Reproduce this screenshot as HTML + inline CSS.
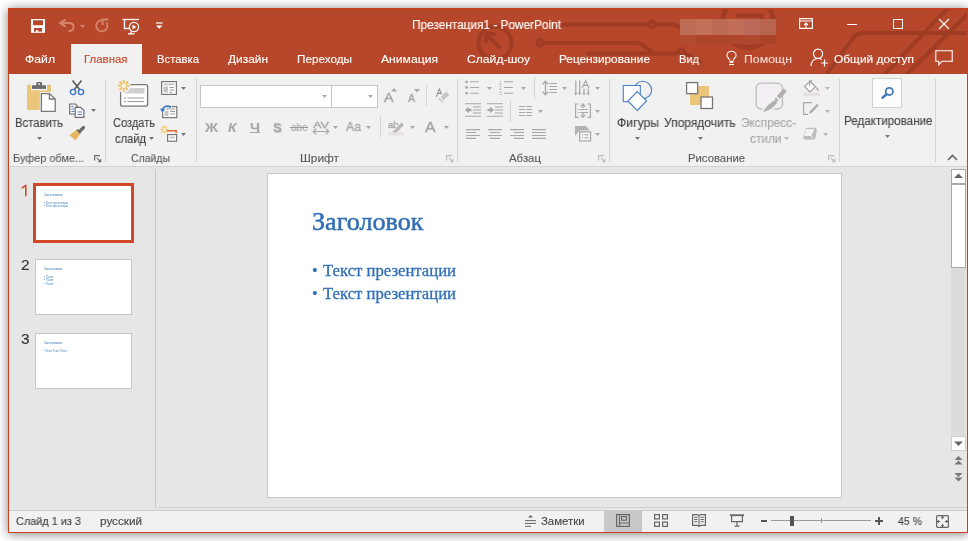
<!DOCTYPE html>
<html><head><meta charset="utf-8">
<style>
*{margin:0;padding:0;box-sizing:border-box}
html,body{width:968px;height:541px;overflow:hidden;background:#fff;font-family:"Liberation Sans",sans-serif}
.a{position:absolute;white-space:nowrap}
div.a{will-change:transform}
svg.a{overflow:visible}
</style></head><body>
<div class="a" style="left:8px;top:8px;width:960px;height:525px;background:#b7472a;box-shadow:0 1px 10px rgba(0,0,0,.5)"></div>
<svg class="a" style="left:9px;top:9px;overflow:hidden" width="958" height="65" viewBox="0 0 958 65"><g transform="translate(-9,-9)" stroke="#a03c23" stroke-width="4" fill="none" stroke-linejoin="round">
<path d="M561 24.4 H672 Q677 24.4 681 29"/><circle cx="652.2" cy="24.4" r="2.9" fill="#b7472a" stroke-width="3.6"/>
<path d="M544 43 H639.5 L654 53.4 H677"/><circle cx="540.3" cy="43" r="3" fill="#b7472a" stroke-width="3.4"/>
<path d="M586 53.4 H654"/>
<path d="M685 53 L702 63"/><circle cx="681.3" cy="52" r="3" fill="#b7472a" stroke-width="3.4"/>
<circle cx="495" cy="43" r="16.5" stroke-width="4"/><path d="M486 34 L500 48 M486 34 V43 M486 34 H495"/>
<circle cx="748" cy="22" r="25.5" stroke-width="5"/><path d="M736 15.5 H762 V40"/>
<path d="M970 33 H862 Q857 33 854 37 L826 75"/>
<path d="M950 6 L884 75 M972 10 L906 75"/>
</g></svg>
<svg class="a" style="left:31px;top:19px;" width="14" height="14" viewBox="0 0 14 14"><rect x="0" y="0" width="14" height="13.8" fill="#fff"/><path d="M2 1.2 H12 V5.2 L11.2 6.2 H2.8 L2 5.2 Z" fill="#b7472a"/><rect x="3" y="9" width="8" height="3.6" fill="#b7472a"/><rect x="5" y="11" width="2.2" height="1.8" fill="#fff"/></svg>
<svg class="a" style="left:58px;top:18px;" width="17" height="15" viewBox="0 0 17 15"><path d="M7.5 1.5 L2.2 5 L7.5 8.5" fill="none" stroke="#d6836b" stroke-width="2.2" stroke-linejoin="miter"/><path d="M2.5 5 H10.5 C13.8 5 15.6 6.8 15.6 9 C15.6 11.2 13.8 13 10.5 13" fill="none" stroke="#d6836b" stroke-width="2"/></svg>
<svg class="a" style="left:80px;top:25px;" width="5" height="3" viewBox="0 0 5 3"><path d="M0 0 H5 L2.5 3 Z" fill="#d9886f"/></svg>
<svg class="a" style="left:94px;top:18px;" width="16" height="16" viewBox="0 0 16 16"><path d="M8.2 2.2 A5.6 5.6 0 1 0 12.3 4.4" fill="none" stroke="#d6836b" stroke-width="1.9"/><path d="M14.2 1.6 H8.6 V7" fill="none" stroke="#d6836b" stroke-width="2"/></svg>
<svg class="a" style="left:122px;top:18px;" width="18" height="17" viewBox="0 0 18 17"><path d="M0.5 1.5 H17" stroke="#fff" stroke-width="1.3"/><path d="M2.5 2 V10.5 H8" fill="none" stroke="#fff" stroke-width="1.3"/><path d="M9 13.5 V15.5 M6 15.8 H12.5" fill="none" stroke="#fff" stroke-width="1.3"/><circle cx="12" cy="9" r="4.6" fill="none" stroke="#fff" stroke-width="1.3"/><path d="M10.5 6.6 L14.3 9 L10.5 11.4 Z" fill="#fff"/></svg>
<svg class="a" style="left:156px;top:22px;" width="7" height="8" viewBox="0 0 7 8"><path d="M0 1 H6.5" stroke="#fff" stroke-width="1.2"/><path d="M0 3.5 H6.5 L3.25 6.8 Z" fill="#fff"/></svg>
<div class="a" style="left:412px;top:19.32px;font:400 12.5px/12.5px &quot;Liberation Sans&quot;;color:#fff;transform:scaleX(0.9461);transform-origin:0 0;-webkit-text-stroke:0.12px #fff;">Презентация1 - PowerPoint</div>
<svg class="a" style="left:680px;top:19px;" width="96" height="25" viewBox="0 0 96 25"><rect x="0" y="0" width="16" height="16" fill="#bf6c56"/><rect x="0" y="16" width="16" height="9" fill="#b14a2f"/><rect x="16" y="0" width="16" height="16" fill="#c3705a"/><rect x="16" y="16" width="16" height="9" fill="#ad4429"/><rect x="32" y="0" width="16" height="16" fill="#bd6a55"/><rect x="32" y="16" width="16" height="9" fill="#ad4429"/><rect x="48" y="0" width="16" height="16" fill="#c16d57"/><rect x="48" y="16" width="16" height="9" fill="#b0472c"/><rect x="64" y="0" width="16" height="16" fill="#bb6a5a"/><rect x="64" y="16" width="16" height="9" fill="#b0482d"/><rect x="80" y="0" width="16" height="16" fill="#b8654f"/><rect x="80" y="16" width="16" height="9" fill="#ab4328"/></svg>
<svg class="a" style="left:799px;top:18px;" width="14" height="11" viewBox="0 0 14 11"><path d="M0.6 0.6 H13.4 V10.4 H0.6 Z M0.6 3 H13.4" fill="none" stroke="#fff" stroke-width="1.1"/><path d="M7 9.8 V5.2 M5 7 L7 5 L9 7" fill="none" stroke="#fff" stroke-width="1.1"/></svg>
<div class="a" style="left:847px;top:24px;width:10px;height:1px;background:#fff"></div>
<div class="a" style="left:893px;top:19px;width:10px;height:10px;border:1px solid #fff"></div>
<svg class="a" style="left:938px;top:18px;" width="12" height="12" viewBox="0 0 12 12"><path d="M1 1 L11 11 M11 1 L1 11" stroke="#fff" stroke-width="1.1"/></svg>
<div class="a" style="left:71px;top:44px;width:71px;height:30px;background:#f1f1f1"></div>
<div class="a" style="left:25px;top:54.33px;font:400 11.3px/11.3px &quot;Liberation Sans&quot;;color:#fff;transform:scaleX(1.0802);transform-origin:0 0;-webkit-text-stroke:0.12px #fff;">Файл</div>
<div class="a" style="left:84px;top:54.33px;font:400 11.3px/11.3px &quot;Liberation Sans&quot;;color:#c5472a;transform:scaleX(1.0117);transform-origin:0 0;-webkit-text-stroke:0.12px #c5472a;">Главная</div>
<div class="a" style="left:157px;top:54.33px;font:400 11.3px/11.3px &quot;Liberation Sans&quot;;color:#fff;transform:scaleX(1.0003);transform-origin:0 0;-webkit-text-stroke:0.12px #fff;">Вставка</div>
<div class="a" style="left:228px;top:54.33px;font:400 11.3px/11.3px &quot;Liberation Sans&quot;;color:#fff;transform:scaleX(1.0534);transform-origin:0 0;-webkit-text-stroke:0.12px #fff;">Дизайн</div>
<div class="a" style="left:297px;top:54.33px;font:400 11.3px/11.3px &quot;Liberation Sans&quot;;color:#fff;transform:scaleX(1.0380);transform-origin:0 0;-webkit-text-stroke:0.12px #fff;">Переходы</div>
<div class="a" style="left:381px;top:54.33px;font:400 11.3px/11.3px &quot;Liberation Sans&quot;;color:#fff;transform:scaleX(1.0748);transform-origin:0 0;-webkit-text-stroke:0.12px #fff;">Анимация</div>
<div class="a" style="left:467px;top:54.33px;font:400 11.3px/11.3px &quot;Liberation Sans&quot;;color:#fff;transform:scaleX(1.0757);transform-origin:0 0;-webkit-text-stroke:0.12px #fff;">Слайд-шоу</div>
<div class="a" style="left:559px;top:54.33px;font:400 11.3px/11.3px &quot;Liberation Sans&quot;;color:#fff;transform:scaleX(1.0432);transform-origin:0 0;-webkit-text-stroke:0.12px #fff;">Рецензирование</div>
<div class="a" style="left:679px;top:54.33px;font:400 11.3px/11.3px &quot;Liberation Sans&quot;;color:#fff;transform:scaleX(0.9786);transform-origin:0 0;-webkit-text-stroke:0.12px #fff;">Вид</div>
<svg class="a" style="left:726px;top:51px;" width="11" height="15" viewBox="0 0 11 15"><path d="M3.6 9.4 C3.6 7.4 0.9 6.4 0.9 4.4 A4.6 4.1 0 0 1 10.1 4.4 C10.1 6.4 7.4 7.4 7.4 9.4" fill="none" stroke="#fff" stroke-width="1.1"/><rect x="3.5" y="9.8" width="4" height="2" fill="#fff"/><path d="M3 13.5 H8" stroke="#fff" stroke-width="1.1"/></svg>
<div class="a" style="left:744px;top:54.33px;font:400 11.3px/11.3px &quot;Liberation Sans&quot;;color:#f3d9d1;transform:scaleX(1.0913);transform-origin:0 0;-webkit-text-stroke:0.12px #f3d9d1;">Помощн</div>
<svg class="a" style="left:810px;top:48px;" width="19" height="19" viewBox="0 0 19 19"><circle cx="8" cy="5.8" r="4.6" fill="none" stroke="#fff" stroke-width="1.2"/><path d="M1 18 C1.5 12.5 4 10.5 8 10.5 C9.6 10.5 10.8 10.8 11.8 11.4" fill="none" stroke="#fff" stroke-width="1.2"/><path d="M14.5 11.5 V18.5 M11 15 H18" stroke="#fff" stroke-width="1.2"/></svg>
<div class="a" style="left:834px;top:54.33px;font:400 11.3px/11.3px &quot;Liberation Sans&quot;;color:#fff;transform:scaleX(1.0540);transform-origin:0 0;-webkit-text-stroke:0.12px #fff;">Общий доступ</div>
<svg class="a" style="left:935px;top:50px;" width="18" height="16" viewBox="0 0 18 16"><path d="M0.8 0.8 H17.2 V11.2 H7 L3.8 14.8 V11.2 H0.8 Z" fill="none" stroke="#fff" stroke-width="1.1"/></svg>
<div class="a" style="left:9px;top:74px;width:958px;height:93px;background:#f1f1f1;border-bottom:1px solid #d4d4d4"></div>
<svg class="a" style="left:26px;top:81px;" width="31" height="32" viewBox="0 0 31 32"><rect x="1" y="3.7" width="24" height="25.3" rx="1.2" fill="#eac57a"/>
<rect x="5" y="2.8" width="16" height="6.6" fill="#f1f1f1"/>
<rect x="6" y="4.3" width="14" height="3.6" fill="#6b6b6b"/>
<rect x="10.3" y="1" width="5.7" height="4" rx="1" fill="#6b6b6b"/><circle cx="13.1" cy="3" r="0.9" fill="#f1f1f1"/>
<rect x="13.8" y="11" width="17" height="21" fill="#f1f1f1"/>
<path d="M15.4 12.6 H23.4 L29.2 18 V30.4 H15.4 Z" fill="#fff" stroke="#777" stroke-width="1.3"/>
<path d="M23.4 12.6 V18 H29.2" fill="none" stroke="#777" stroke-width="1.3"/></svg>
<div class="a" style="left:15px;top:117.49px;font:400 12.3px/12.3px &quot;Liberation Sans&quot;;color:#444;transform:scaleX(0.9209);transform-origin:0 0;-webkit-text-stroke:0.12px #444;">Вставить</div>
<svg class="a" style="left:37px;top:137px;" width="5" height="3" viewBox="0 0 5 3"><path d="M0 0 H5 L2.5 3 Z" fill="#777"/></svg>
<svg class="a" style="left:69px;top:80px;" width="16" height="16" viewBox="0 0 16 16"><path d="M3.5 0.5 L11 10 M12.5 0.5 L5 10" stroke="#555" stroke-width="1.5"/>
<circle cx="4" cy="12" r="2.6" fill="none" stroke="#3a78c3" stroke-width="1.4"/><circle cx="12" cy="12" r="2.6" fill="none" stroke="#3a78c3" stroke-width="1.4"/></svg>
<svg class="a" style="left:69px;top:103px;" width="16" height="15" viewBox="0 0 16 15"><path d="M0.7 1 H6.2 L8.5 3.3 V11 H0.7 Z" fill="#fff" stroke="#6b6b6b" stroke-width="1.2"/>
<path d="M2.2 3.5 H4.5 M2.2 6 H5.5 M2.2 8.5 H5.5" stroke="#4a80c8" stroke-width="1.1"/>
<path d="M6.2 4.3 H11.7 L14.9 7.5 V14.4 H6.2 Z" fill="#fff" stroke="#6b6b6b" stroke-width="1.2"/>
<path d="M8.5 9 H13 M8.5 11.5 H13" stroke="#4a80c8" stroke-width="1.1"/></svg>
<svg class="a" style="left:91px;top:109px;" width="5" height="3" viewBox="0 0 5 3"><path d="M0 0 H5 L2.5 3 Z" fill="#777"/></svg>
<svg class="a" style="left:69px;top:126px;" width="17" height="15" viewBox="0 0 17 15"><path d="M9.5 6.5 L14.5 1.5" stroke="#6b6b6b" stroke-width="3.2" stroke-linecap="round"/>
<path d="M0.5 9 L8 3.5 L11.5 7.5 L6.5 14.5 Z" fill="#e8b65e"/>
<path d="M8 3.5 L11.5 7.5" stroke="#6b6b6b" stroke-width="1.6"/></svg>
<div class="a" style="left:13px;top:153.33px;font:400 11.3px/11.3px &quot;Liberation Sans&quot;;color:#5a5a5a;transform:scaleX(0.9639);transform-origin:0 0;-webkit-text-stroke:0.12px #5a5a5a;">Буфер обме...</div>
<svg class="a" style="left:94px;top:155px;" width="8" height="8" viewBox="0 0 8 8"><path d="M0.6 5.6 V0.6 H6" fill="none" stroke="#6e6e6e" stroke-width="1.2"/><path d="M2.8 2.8 L6 6" stroke="#6e6e6e" stroke-width="1.1"/><path d="M7.3 3.6 V7.3 H3.6 Z" fill="#6e6e6e"/></svg>
<div class="a" style="left:105px;top:79px;width:1px;height:83px;background:#d5d5d5"></div>
<svg class="a" style="left:117px;top:79px;" width="32" height="29" viewBox="0 0 32 29"><rect x="3.6" y="5.6" width="27" height="21.6" rx="2" fill="#fff" stroke="#777" stroke-width="1.3"/>
<rect x="7" y="9" width="20.5" height="5.5" fill="#d0d0d0"/>
<path d="M7 19 H9 M10.5 19 H27 M7 22.5 H9 M10.5 22.5 H27" stroke="#9a9a9a" stroke-width="1"/>
<circle cx="6.7" cy="6.7" r="7" fill="#f1f1f1"/>
<g stroke="#efbe5a" stroke-width="1.8"><path d="M6.7 0.8 V12.6 M0.8 6.7 H12.6 M2.5 2.5 L10.9 10.9 M10.9 2.5 L2.5 10.9"/></g>
<circle cx="6.7" cy="6.7" r="2.4" fill="#fbf3e0"/></svg>
<div class="a" style="left:112.5px;top:117.49px;font:400 12.3px/12.3px &quot;Liberation Sans&quot;;color:#444;transform:scaleX(0.8987);transform-origin:0 0;-webkit-text-stroke:0.12px #444;">Создать</div>
<div class="a" style="left:114.5px;top:133.49px;font:400 12.3px/12.3px &quot;Liberation Sans&quot;;color:#444;transform:scaleX(0.9063);transform-origin:0 0;-webkit-text-stroke:0.12px #444;">слайд</div>
<svg class="a" style="left:149px;top:137px;" width="5" height="3" viewBox="0 0 5 3"><path d="M0 0 H5 L2.5 3 Z" fill="#777"/></svg>
<svg class="a" style="left:161px;top:81px;" width="16" height="14" viewBox="0 0 16 14"><rect x="0.6" y="0.6" width="14.8" height="12.8" fill="#fff" stroke="#777" stroke-width="1.2"/>
<rect x="2.5" y="2.5" width="11" height="1.8" fill="#c4c4c4"/><rect x="2.5" y="5.5" width="4.5" height="6" fill="#c4c4c4"/>
<path d="M8.5 6.5 H13 M8.5 9 H13 M8.5 11.3 H11" stroke="#999" stroke-width="1"/></svg>
<svg class="a" style="left:181px;top:87px;" width="5" height="3" viewBox="0 0 5 3"><path d="M0 0 H5 L2.5 3 Z" fill="#777"/></svg>
<svg class="a" style="left:160px;top:103px;" width="18" height="16" viewBox="0 0 18 16"><rect x="2.6" y="3.6" width="14.2" height="11" fill="#fff" stroke="#777" stroke-width="1.2"/>
<rect x="4.5" y="8" width="4" height="5" fill="#c4c4c4"/><path d="M10 8.5 H15 M10 11 H15 M6 6 H15" stroke="#999" stroke-width="1"/>
<path d="M1.5 8 C2 3 7 1 11.5 4" fill="none" stroke="#f1f1f1" stroke-width="4"/>
<path d="M2.2 7.5 C3 3.5 7 1.8 11 4.2" fill="none" stroke="#3a78c3" stroke-width="1.7"/><path d="M0 5.5 L2.2 9.5 L5.2 6.5 Z" fill="#3a78c3"/></svg>
<svg class="a" style="left:160px;top:125px;" width="18" height="17" viewBox="0 0 18 17"><g stroke="#efbe5a" stroke-width="1.1"><path d="M4.3 0.5 V8.5 M0.3 4.5 H8.3 M1.5 1.7 L7.1 7.3 M7.1 1.7 L1.5 7.3"/></g><circle cx="4.3" cy="4.5" r="1.5" fill="#fbf3e0"/>
<path d="M7 5.7 H16.2 V8.2" fill="none" stroke="#e3692a" stroke-width="1.4"/>
<rect x="7.6" y="9.6" width="9" height="6.6" fill="#fff" stroke="#777" stroke-width="1.2"/><rect x="9.5" y="11.5" width="5.5" height="2" fill="#c8c8c8"/></svg>
<svg class="a" style="left:181px;top:133px;" width="5" height="3" viewBox="0 0 5 3"><path d="M0 0 H5 L2.5 3 Z" fill="#777"/></svg>
<div class="a" style="left:130.5px;top:153.33px;font:400 11.3px/11.3px &quot;Liberation Sans&quot;;color:#5a5a5a;transform:scaleX(0.9274);transform-origin:0 0;-webkit-text-stroke:0.12px #5a5a5a;">Слайды</div>
<div class="a" style="left:196px;top:79px;width:1px;height:83px;background:#d5d5d5"></div>
<div class="a" style="left:200px;top:85px;width:132px;height:23px;background:#fff;border:1px solid #c6c6c6"></div>
<div class="a" style="left:331px;top:85px;width:47px;height:23px;background:#fff;border:1px solid #c6c6c6"></div>
<svg class="a" style="left:322px;top:95px;" width="5" height="3" viewBox="0 0 5 3"><path d="M0 0 H5 L2.5 3 Z" fill="#a8a8a8"/></svg>
<svg class="a" style="left:368px;top:95px;" width="5" height="3" viewBox="0 0 5 3"><path d="M0 0 H5 L2.5 3 Z" fill="#a8a8a8"/></svg>
<div class="a" style="left:384.3px;top:90.97px;font:400 13.5px/13.5px &quot;Liberation Sans&quot;;color:#a8a8a8;transform:scaleX(1.0550);transform-origin:0 0;-webkit-text-stroke:0.12px #a8a8a8;-webkit-text-stroke:0.5px #a8a8a8;">A</div>
<svg class="a" style="left:391px;top:88px;" width="6" height="4" viewBox="0 0 6 4"><path d="M0 3.5 H6 L3 0 Z" fill="#a8a8a8"/></svg>
<div class="a" style="left:407.5px;top:92.79px;font:400 11px/11px &quot;Liberation Sans&quot;;color:#a8a8a8;transform:scaleX(0.9541);transform-origin:0 0;-webkit-text-stroke:0.12px #a8a8a8;-webkit-text-stroke:0.45px #a8a8a8;">A</div>
<svg class="a" style="left:413.5px;top:89px;" width="6" height="4" viewBox="0 0 6 4"><path d="M0 0 H6 L3 3.5 Z" fill="#a8a8a8"/></svg>
<div class="a" style="left:426px;top:85px;width:1px;height:21px;background:#d5d5d5"></div>
<svg class="a" style="left:435px;top:88px;" width="17" height="17" viewBox="0 0 17 17"><path d="M1.2 8.8 L4.3 1 L6.6 6.2 M2.6 5.4 H5.9" fill="none" stroke="#999" stroke-width="1.2"/>
<path d="M11 3.1 L14.9 6.6 L8.8 12.6 L5.3 9.2 Z" fill="#c6c6c6" stroke="#f1f1f1" stroke-width="0.8"/>
<path d="M3 10.8 L4.2 9.7 L8.6 13.6 L7.3 14.9 Z" fill="#cfcfcf"/></svg>
<div class="a" style="left:204.5px;top:120.90px;font:700 13px/13px &quot;Liberation Sans&quot;;color:#a8a8a8;transform:scaleX(1.1064);transform-origin:0 0;-webkit-text-stroke:0.12px #a8a8a8;">Ж</div>
<div class="a" style="left:228px;top:120.90px;font:700 13px/13px &quot;Liberation Sans&quot;;color:#a8a8a8;transform:scaleX(1.0636);transform-origin:0 0;-webkit-text-stroke:0.12px #a8a8a8;font-style:italic;">К</div>
<div class="a" style="left:250px;top:120.90px;font:700 13px/13px &quot;Liberation Sans&quot;;color:#a8a8a8;transform:scaleX(1.0948);transform-origin:0 0;-webkit-text-stroke:0.12px #a8a8a8;">Ч</div>
<div class="a" style="left:250px;top:132px;width:10px;height:1px;background:#a8a8a8"></div>
<div class="a" style="left:274px;top:121.90px;font:700 13px/13px &quot;Liberation Sans&quot;;color:#c8c8c8;transform:scaleX(0.9803);transform-origin:0 0;-webkit-text-stroke:0.12px #c8c8c8;">S</div>
<div class="a" style="left:273px;top:120.90px;font:700 13px/13px &quot;Liberation Sans&quot;;color:#a8a8a8;transform:scaleX(0.9803);transform-origin:0 0;-webkit-text-stroke:0.12px #a8a8a8;">S</div>
<div class="a" style="left:290.8px;top:121.79px;font:400 11px/11px &quot;Liberation Sans&quot;;color:#a8a8a8;transform:scaleX(0.9191);transform-origin:0 0;-webkit-text-stroke:0.12px #a8a8a8;">abc</div>
<div class="a" style="left:290px;top:127px;width:18px;height:1px;background:#999"></div>
<div class="a" style="left:313px;top:119.77px;font:400 9.6px/9.6px &quot;Liberation Sans&quot;;color:#a8a8a8;transform:scaleX(1.3239);transform-origin:0 0;-webkit-text-stroke:0.12px #a8a8a8;-webkit-text-stroke:0.35px #a8a8a8;">AV</div>
<svg class="a" style="left:312px;top:128px;" width="18" height="7" viewBox="0 0 18 7"><path d="M1.2 3.5 H16.8 M4.2 0.8 L1.2 3.5 L4.2 6.2 M13.8 0.8 L16.8 3.5 L13.8 6.2" fill="none" stroke="#a8a8a8" stroke-width="1.2"/></svg>
<svg class="a" style="left:333px;top:126px;" width="5" height="3" viewBox="0 0 5 3"><path d="M0 0 H5 L2.5 3 Z" fill="#a8a8a8"/></svg>
<div class="a" style="left:346px;top:120.47px;font:400 13.5px/13.5px &quot;Liberation Sans&quot;;color:#a8a8a8;transform:scaleX(0.9084);transform-origin:0 0;-webkit-text-stroke:0.12px #a8a8a8;-webkit-text-stroke:0.35px #a8a8a8;">Aa</div>
<svg class="a" style="left:366px;top:126px;" width="5" height="3" viewBox="0 0 5 3"><path d="M0 0 H5 L2.5 3 Z" fill="#a8a8a8"/></svg>
<div class="a" style="left:380px;top:116px;width:1px;height:21px;background:#d5d5d5"></div>
<svg class="a" style="left:388px;top:120px;" width="17" height="15" viewBox="0 0 17 15"><text x="0" y="8.3" font-family="Liberation Sans" font-size="9.5" fill="#a8a8a8" stroke="#a8a8a8" stroke-width="0.35">ab</text>
<path d="M3 12.5 L13.5 1.5 L17 5 L6.5 15 Z" fill="#f1f1f1"/><path d="M4.5 12 L13.5 2.5 L16 5 L7 14 Z" fill="#b8b8b8"/><rect x="0" y="12.3" width="16" height="3.2" fill="#e7e0e7"/></svg>
<svg class="a" style="left:410px;top:126px;" width="5" height="3" viewBox="0 0 5 3"><path d="M0 0 H5 L2.5 3 Z" fill="#a8a8a8"/></svg>
<div class="a" style="left:425px;top:119.63px;font:400 14.5px/14.5px &quot;Liberation Sans&quot;;color:#a8a8a8;transform:scaleX(1.0857);transform-origin:0 0;-webkit-text-stroke:0.12px #a8a8a8;-webkit-text-stroke:0.5px #a8a8a8;">A</div>
<svg class="a" style="left:444px;top:126px;" width="5" height="3" viewBox="0 0 5 3"><path d="M0 0 H5 L2.5 3 Z" fill="#a8a8a8"/></svg>
<div class="a" style="left:299.5px;top:153.33px;font:400 11.3px/11.3px &quot;Liberation Sans&quot;;color:#5a5a5a;transform:scaleX(1.0493);transform-origin:0 0;-webkit-text-stroke:0.12px #5a5a5a;">Шрифт</div>
<svg class="a" style="left:446px;top:155px;" width="8" height="8" viewBox="0 0 8 8"><path d="M0.6 5.6 V0.6 H6" fill="none" stroke="#bdbdbd" stroke-width="1.2"/><path d="M2.8 2.8 L6 6" stroke="#bdbdbd" stroke-width="1.1"/><path d="M7.3 3.6 V7.3 H3.6 Z" fill="#bdbdbd"/></svg>
<div class="a" style="left:457px;top:79px;width:1px;height:83px;background:#d5d5d5"></div>
<svg class="a" style="left:465px;top:80px;" width="15" height="15" viewBox="0 0 15 15"><g fill="#a8a8a8"><circle cx="1.6" cy="1.8" r="1.4"/><circle cx="1.6" cy="7.5" r="1.4"/><circle cx="1.6" cy="13.2" r="1.4"/></g><path d="M5 1.8 H14 M5 7.5 H14 M5 13.2 H14" stroke="#a8a8a8" stroke-width="1.1"/></svg>
<svg class="a" style="left:487px;top:87px;" width="5" height="3" viewBox="0 0 5 3"><path d="M0 0 H5 L2.5 3 Z" fill="#a8a8a8"/></svg>
<svg class="a" style="left:499px;top:80px;" width="15" height="15" viewBox="0 0 15 15"><text x="0" y="5" font-family="Liberation Sans" font-size="5" fill="#a8a8a8">1</text><text x="0" y="10" font-family="Liberation Sans" font-size="5" fill="#a8a8a8">2</text><text x="0" y="15" font-family="Liberation Sans" font-size="5" fill="#a8a8a8">3</text><path d="M5 1.8 H14 M5 7.5 H14 M5 13.2 H14" stroke="#a8a8a8" stroke-width="1.1"/></svg>
<svg class="a" style="left:521px;top:87px;" width="5" height="3" viewBox="0 0 5 3"><path d="M0 0 H5 L2.5 3 Z" fill="#a8a8a8"/></svg>
<div class="a" style="left:534px;top:77px;width:1px;height:22px;background:#d5d5d5"></div>
<svg class="a" style="left:542px;top:80px;" width="16" height="16" viewBox="0 0 16 16"><path d="M3.5 1.5 V14.5" stroke="#a8a8a8" stroke-width="1.2"/><path d="M0.8 4.2 L3.5 1.2 L6.2 4.2 M0.8 11.8 L3.5 14.8 L6.2 11.8" fill="none" stroke="#a8a8a8" stroke-width="1.3"/><path d="M7.5 3.5 H15 M7.5 6.5 H15 M7.5 9.5 H15 M7.5 12.5 H15" stroke="#a8a8a8" stroke-width="1.1"/></svg>
<svg class="a" style="left:562px;top:87px;" width="5" height="3" viewBox="0 0 5 3"><path d="M0 0 H5 L2.5 3 Z" fill="#a8a8a8"/></svg>
<svg class="a" style="left:575px;top:80px;" width="16" height="16" viewBox="0 0 16 16"><path d="M0.8 0.5 V14 M4.7 0.5 V14 M9 8.8 V14 M13.2 8.8 V14" stroke="#a8a8a8" stroke-width="1.2"/><path d="M-1 12.8 L0.8 15.6 L2.6 12.8 Z M2.9 12.8 L4.7 15.6 L6.5 12.8 Z M7.2 12.8 L9 15.6 L10.8 12.8 Z M11.4 12.8 L13.2 15.6 L15 12.8 Z" fill="#a8a8a8"/><path d="M7.2 8 L10.6 0.6 L14 8 M8.3 5.3 H12.9" fill="none" stroke="#a8a8a8" stroke-width="1.2"/></svg>
<svg class="a" style="left:595px;top:87px;" width="5" height="3" viewBox="0 0 5 3"><path d="M0 0 H5 L2.5 3 Z" fill="#a8a8a8"/></svg>
<svg class="a" style="left:465px;top:103px;" width="16" height="14" viewBox="0 0 16 14"><path d="M0 0.8 H16 M8 4 H16 M8 7 H16 M8 10 H16 M0 13.2 H16" stroke="#a8a8a8" stroke-width="1.1"/><path d="M0 7 L3.8 3.8 V5.8 H6.5 V8.2 H3.8 V10.2 Z" fill="#a8a8a8"/></svg>
<svg class="a" style="left:487px;top:103px;" width="16" height="14" viewBox="0 0 16 14"><path d="M0 0.8 H16 M8 4 H16 M8 7 H16 M8 10 H16 M0 13.2 H16" stroke="#a8a8a8" stroke-width="1.1"/><path d="M7 7 L3.2 3.8 V5.8 H0.5 V8.2 H3.2 V10.2 Z" fill="#a8a8a8"/></svg>
<div class="a" style="left:510px;top:100px;width:1px;height:22px;background:#d5d5d5"></div>
<svg class="a" style="left:519px;top:105px;" width="14" height="12" viewBox="0 0 14 12"><path d="M0 1.5 H6 M0 4.5 H6 M0 7.5 H6 M0 10.5 H6 M7 1.5 H13 M7 4.5 H13 M7 7.5 H13 M7 10.5 H13" stroke="#a8a8a8" stroke-width="1.1"/></svg>
<svg class="a" style="left:538px;top:110px;" width="5" height="3" viewBox="0 0 5 3"><path d="M0 0 H5 L2.5 3 Z" fill="#a8a8a8"/></svg>
<svg class="a" style="left:575px;top:103px;" width="16" height="16" viewBox="0 0 16 16"><rect x="1" y="1" width="14" height="13.5" fill="#f4eff4"/><path d="M3.5 1 H0.6 V14.4 H3.5 M12.5 1 H15.4 V14.4 H12.5" fill="none" stroke="#a8a8a8" stroke-width="1.2"/><path d="M8 1.5 V5 M8 10 V14" stroke="#a8a8a8" stroke-width="1.2"/><path d="M5.8 3.6 L8 1 L10.2 3.6 M5.8 11.8 L8 14.4 L10.2 11.8" fill="none" stroke="#a8a8a8" stroke-width="1.2"/><path d="M3 6.5 H4 M5 6.5 H13 M3 9.5 H4 M5 9.5 H13" stroke="#a8a8a8" stroke-width="1"/></svg>
<svg class="a" style="left:595px;top:110px;" width="5" height="3" viewBox="0 0 5 3"><path d="M0 0 H5 L2.5 3 Z" fill="#a8a8a8"/></svg>
<svg class="a" style="left:466px;top:129px;" width="14" height="10" viewBox="0 0 14 10"><path d="M0 0.6 H14 M0 3.5 H10 M0 6.5 H14 M0 9.4 H10" stroke="#a8a8a8" stroke-width="1.1"/></svg>
<svg class="a" style="left:488px;top:129px;" width="14" height="10" viewBox="0 0 14 10"><path d="M0 0.6 H14 M2 3.5 H12 M0 6.5 H14 M2 9.4 H12" stroke="#a8a8a8" stroke-width="1.1"/></svg>
<svg class="a" style="left:510px;top:129px;" width="14" height="10" viewBox="0 0 14 10"><path d="M0 0.6 H14 M4 3.5 H14 M0 6.5 H14 M4 9.4 H14" stroke="#a8a8a8" stroke-width="1.1"/></svg>
<svg class="a" style="left:532px;top:129px;" width="14" height="10" viewBox="0 0 14 10"><path d="M0 0.6 H14 M0 3.5 H14 M0 6.5 H14 M0 9.4 H14" stroke="#a8a8a8" stroke-width="1.1"/></svg>
<svg class="a" style="left:575px;top:126px;" width="17" height="16" viewBox="0 0 17 16"><path d="M0 0 H11 L15 4.6 H4.5 L0 10 Z" fill="#b3b3b3"/><rect x="4.6" y="5.8" width="11" height="9.2" fill="#f4eff4" stroke="#a8a8a8" stroke-width="1.2"/><path d="M7 8.8 H8 M9.5 8.8 H13.5 M7 11.8 H8 M9.5 11.8 H13.5" stroke="#a8a8a8" stroke-width="1"/></svg>
<svg class="a" style="left:595px;top:133px;" width="5" height="3" viewBox="0 0 5 3"><path d="M0 0 H5 L2.5 3 Z" fill="#a8a8a8"/></svg>
<div class="a" style="left:509px;top:153.33px;font:400 11.3px/11.3px &quot;Liberation Sans&quot;;color:#5a5a5a;transform:scaleX(1.0098);transform-origin:0 0;-webkit-text-stroke:0.12px #5a5a5a;">Абзац</div>
<svg class="a" style="left:598px;top:155px;" width="8" height="8" viewBox="0 0 8 8"><path d="M0.6 5.6 V0.6 H6" fill="none" stroke="#bdbdbd" stroke-width="1.2"/><path d="M2.8 2.8 L6 6" stroke="#bdbdbd" stroke-width="1.1"/><path d="M7.3 3.6 V7.3 H3.6 Z" fill="#bdbdbd"/></svg>
<div class="a" style="left:609px;top:79px;width:1px;height:83px;background:#d5d5d5"></div>
<svg class="a" style="left:620px;top:80px;" width="34" height="33" viewBox="0 0 34 33"><circle cx="22.8" cy="10" r="8.8" fill="#f1f1f1" stroke="#4a80c4" stroke-width="1.1"/>
<rect x="3.3" y="5.5" width="17" height="16.2" fill="#fff" stroke="#4a80c4" stroke-width="1.1"/>
<path d="M17.3 11.6 L26.6 21 L17.3 30.4 L7.9 21 Z" fill="#fff" stroke="#4a80c4" stroke-width="1.1"/></svg>
<div class="a" style="left:616.5px;top:117.49px;font:400 12.3px/12.3px &quot;Liberation Sans&quot;;color:#444;transform:scaleX(0.9908);transform-origin:0 0;-webkit-text-stroke:0.12px #444;">Фигуры</div>
<svg class="a" style="left:635px;top:137px;" width="5" height="3" viewBox="0 0 5 3"><path d="M0 0 H5 L2.5 3 Z" fill="#777"/></svg>
<svg class="a" style="left:685px;top:81px;" width="29" height="29" viewBox="0 0 29 29"><rect x="5" y="5" width="19" height="19" fill="#eac57a"/>
<rect x="1.6" y="1.6" width="11" height="11" fill="#fff" stroke="#777" stroke-width="1.3"/>
<rect x="16" y="16" width="11.5" height="11.5" fill="#fff" stroke="#777" stroke-width="1.3"/></svg>
<div class="a" style="left:664px;top:117.49px;font:400 12.3px/12.3px &quot;Liberation Sans&quot;;color:#444;transform:scaleX(0.9771);transform-origin:0 0;-webkit-text-stroke:0.12px #444;">Упорядочить</div>
<svg class="a" style="left:698px;top:137px;" width="5" height="3" viewBox="0 0 5 3"><path d="M0 0 H5 L2.5 3 Z" fill="#777"/></svg>
<svg class="a" style="left:755px;top:82px;" width="32" height="31" viewBox="0 0 32 31"><rect x="1.2" y="1.2" width="26.3" height="25.8" rx="5" fill="#f4eff4" stroke="#bdbdbd" stroke-width="1.3"/>
<path d="M31 7 L20 19 M20 18 C17 19.5 12 23 7.5 30 C13 29 19 26 22.5 21 Z" stroke="#f1f1f1" stroke-width="3.5" fill="#f1f1f1"/>
<path d="M30.2 7.8 L23.5 15.5" stroke="#b0b0b0" stroke-width="4.2"/>
<path d="M22.3 16.8 L20.8 18.5" stroke="#b0b0b0" stroke-width="3.6"/>
<path d="M19.8 18.3 C16.5 20 12 23.5 8 29.8 C13.5 29 18.5 26 21.8 21 C22.2 20 21 18.5 19.8 18.3 Z" fill="#b0b0b0"/></svg>
<div class="a" style="left:741px;top:117.49px;font:400 12.3px/12.3px &quot;Liberation Sans&quot;;color:#a8a8a8;transform:scaleX(0.9610);transform-origin:0 0;-webkit-text-stroke:0.12px #a8a8a8;">Экспресс-</div>
<div class="a" style="left:749.5px;top:133.49px;font:400 12.3px/12.3px &quot;Liberation Sans&quot;;color:#a8a8a8;transform:scaleX(0.9635);transform-origin:0 0;-webkit-text-stroke:0.12px #a8a8a8;">стили</div>
<svg class="a" style="left:784px;top:137px;" width="5" height="3" viewBox="0 0 5 3"><path d="M0 0 H5 L2.5 3 Z" fill="#b5b5b5"/></svg>
<svg class="a" style="left:803px;top:80px;" width="17" height="17" viewBox="0 0 17 17"><path d="M1.5 6.5 L7 1.5 L12.5 6.8 L7 12 Z" fill="#fff" stroke="#a8a8a8" stroke-width="1.3"/><path d="M6.5 6 V0.8 H8.5 V4" fill="none" stroke="#a8a8a8" stroke-width="1.1"/>
<path d="M12.5 6.8 C14.5 8 16 9.5 15.5 11.5 C14.5 11 13.5 9 12.5 6.8 Z" fill="#999"/>
<rect x="0" y="12.6" width="17" height="3.6" fill="#e6dfe6"/></svg>
<svg class="a" style="left:825px;top:87px;" width="5" height="3" viewBox="0 0 5 3"><path d="M0 0 H5 L2.5 3 Z" fill="#b5b5b5"/></svg>
<svg class="a" style="left:803px;top:102px;" width="16" height="13" viewBox="0 0 16 13"><path d="M9 0.6 H0.6 V12.4 H5" fill="none" stroke="#a8a8a8" stroke-width="1.2"/>
<path d="M5.5 12 L7 9 L14 1.8 L15.8 3.6 L8.8 10.8 Z" fill="#b0b0b0"/></svg>
<svg class="a" style="left:825px;top:110px;" width="5" height="3" viewBox="0 0 5 3"><path d="M0 0 H5 L2.5 3 Z" fill="#b5b5b5"/></svg>
<svg class="a" style="left:802px;top:127px;" width="17" height="14" viewBox="0 0 17 14"><path d="M4 1.8 Q4.6 0.8 6 0.8 H12.6 Q14.6 0.8 14.8 3 L13.6 10.5 Q13 12.8 10.8 12.8 H3.6 Q1.4 12.8 1.4 10.6 L1.6 8.6 Z" fill="#bcbcbc"/>
<path d="M4.2 1.9 H12.4 L9.3 9 H2.1 Z" fill="#f5f0f5"/>
<path d="M9.3 9 L11.2 12.2" stroke="#ececec" stroke-width="0.9"/></svg>
<svg class="a" style="left:823px;top:133px;" width="5" height="3" viewBox="0 0 5 3"><path d="M0 0 H5 L2.5 3 Z" fill="#b5b5b5"/></svg>
<div class="a" style="left:688px;top:153.33px;font:400 11.3px/11.3px &quot;Liberation Sans&quot;;color:#5a5a5a;transform:scaleX(1.0019);transform-origin:0 0;-webkit-text-stroke:0.12px #5a5a5a;">Рисование</div>
<svg class="a" style="left:828px;top:155px;" width="8" height="8" viewBox="0 0 8 8"><path d="M0.6 5.6 V0.6 H6" fill="none" stroke="#bdbdbd" stroke-width="1.2"/><path d="M2.8 2.8 L6 6" stroke="#bdbdbd" stroke-width="1.1"/><path d="M7.3 3.6 V7.3 H3.6 Z" fill="#bdbdbd"/></svg>
<div class="a" style="left:839px;top:79px;width:1px;height:83px;background:#d5d5d5"></div>
<div class="a" style="left:872px;top:78px;width:30px;height:30px;background:#fcfcfc;border:1px solid #d2d2d2"></div>
<svg class="a" style="left:880px;top:86px;" width="14" height="14" viewBox="0 0 14 14"><circle cx="9.3" cy="5.4" r="3.6" fill="#fff" stroke="#3f78be" stroke-width="1.8"/><path d="M6.6 8.2 L2.6 11.6" stroke="#3f78be" stroke-width="2.5" stroke-linecap="round"/></svg>
<div class="a" style="left:843.5px;top:115.49px;font:400 12.3px/12.3px &quot;Liberation Sans&quot;;color:#444;transform:scaleX(0.9448);transform-origin:0 0;-webkit-text-stroke:0.12px #444;">Редактирование</div>
<svg class="a" style="left:885px;top:135px;" width="5" height="3" viewBox="0 0 5 3"><path d="M0 0 H5 L2.5 3 Z" fill="#777"/></svg>
<div class="a" style="left:935px;top:79px;width:1px;height:83px;background:#d5d5d5"></div>
<svg class="a" style="left:947px;top:154px;" width="11" height="7" viewBox="0 0 11 7"><path d="M1 6 L5.5 1.5 L10 6" fill="none" stroke="#666" stroke-width="1.6"/></svg>
<div class="a" style="left:9px;top:167px;width:958px;height:343px;background:#e6e6e6"></div>
<div class="a" style="left:155px;top:169px;width:1px;height:339px;background:#c9c9c9"></div>
<div class="a" style="left:33px;top:183px;width:101px;height:60px;border:3px solid #d24726;background:#fff"></div>
<svg class="a" style="left:20px;top:183px;" width="10" height="15" viewBox="0 0 10 15"><path d="M5.8 2.3 V12.8 M5.8 2.4 L2.2 4.8" fill="none" stroke="#d24726" stroke-width="1.5" stroke-linecap="round"/></svg>
<svg class="a" style="left:0px;top:0px;pointer-events:none" width="968" height="541" viewBox="0 0 968 541"><text x="44" y="196" font-family="Liberation Serif" font-size="4.8" fill="#3b77bd" textLength="18.5" lengthAdjust="spacingAndGlyphs">Заголовок</text><text x="44" y="203.5" font-family="Liberation Serif" font-size="3.4" fill="#3b77bd" textLength="24" lengthAdjust="spacingAndGlyphs">• Текст презентации</text><text x="44" y="207.3" font-family="Liberation Serif" font-size="3.4" fill="#3b77bd" textLength="24" lengthAdjust="spacingAndGlyphs">• Текст презентации</text></svg>
<div class="a" style="left:35px;top:259px;width:97px;height:56px;border:1px solid #c6c6c6;background:#fff"></div>
<div class="a" style="left:20.8px;top:257.06px;font:400 15.4px/15.4px &quot;Liberation Sans&quot;;color:#333;-webkit-text-stroke:0.12px #333;">2</div>
<div class="a" style="left:35px;top:333px;width:97px;height:56px;border:1px solid #c6c6c6;background:#fff"></div>
<div class="a" style="left:20.8px;top:331.06px;font:400 15.4px/15.4px &quot;Liberation Sans&quot;;color:#333;-webkit-text-stroke:0.12px #333;">3</div>
<svg class="a" style="left:0px;top:0px;pointer-events:none" width="968" height="541" viewBox="0 0 968 541"><text x="44" y="270.3" font-family="Liberation Serif" font-size="4.8" fill="#3b77bd" textLength="18.3" lengthAdjust="spacingAndGlyphs">Заголовок</text><text x="44" y="277.6" font-family="Liberation Serif" font-size="3.4" fill="#3b77bd" textLength="9.5" lengthAdjust="spacingAndGlyphs">• Текст</text><text x="44" y="281.2" font-family="Liberation Serif" font-size="3.4" fill="#3b77bd" textLength="9.5" lengthAdjust="spacingAndGlyphs">• Текст</text><text x="44" y="284.8" font-family="Liberation Serif" font-size="3.4" fill="#3b77bd" textLength="9.5" lengthAdjust="spacingAndGlyphs">• Текст</text><text x="44" y="344.3" font-family="Liberation Serif" font-size="4.8" fill="#3b77bd" textLength="18.3" lengthAdjust="spacingAndGlyphs">Заголовок</text><text x="44" y="352.2" font-family="Liberation Serif" font-size="3.4" fill="#3b77bd" textLength="23" lengthAdjust="spacingAndGlyphs">• Текст Текст Текст</text></svg>
<div class="a" style="left:267px;top:173px;width:575px;height:325px;background:#fff;border:1px solid #c8c8c8"></div>
<div class="a" style="left:312px;top:210.48px;font:400 24.5px/24.5px &quot;Liberation Serif&quot;;color:#2f6eb5;transform:scaleX(1.0665);transform-origin:0 0;-webkit-text-stroke:0.12px #2f6eb5;-webkit-text-stroke:0.45px #2f6eb5;">Заголовок</div>
<div class="a" style="left:312px;top:262.65px;font:400 16.3px/16.3px &quot;Liberation Serif&quot;;color:#2f6eb5;-webkit-text-stroke:0.12px #2f6eb5;">•</div>
<div class="a" style="left:323.4px;top:262.65px;font:400 16.3px/16.3px &quot;Liberation Serif&quot;;color:#2f6eb5;transform:scaleX(1.0247);transform-origin:0 0;-webkit-text-stroke:0.12px #2f6eb5;-webkit-text-stroke:0.3px #2f6eb5;">Текст презентации</div>
<div class="a" style="left:312px;top:285.95px;font:400 16.3px/16.3px &quot;Liberation Serif&quot;;color:#2f6eb5;-webkit-text-stroke:0.12px #2f6eb5;">•</div>
<div class="a" style="left:323.4px;top:285.95px;font:400 16.3px/16.3px &quot;Liberation Serif&quot;;color:#2f6eb5;transform:scaleX(1.0247);transform-origin:0 0;-webkit-text-stroke:0.12px #2f6eb5;-webkit-text-stroke:0.3px #2f6eb5;">Текст презентации</div>
<div class="a" style="left:158px;top:507px;width:809px;height:1px;background:#d0d0d0"></div>
<div class="a" style="left:951px;top:169px;width:15px;height:282px;background:#dcdcdc"></div>
<div class="a" style="left:951px;top:169px;width:15px;height:15px;background:#fff;border:1px solid #a9a9a9"></div>
<svg class="a" style="left:954px;top:173px;" width="9" height="6" viewBox="0 0 9 6"><path d="M0 5 H9 L4.5 0.5 Z" fill="#666"/></svg>
<div class="a" style="left:951px;top:184px;width:15px;height:84px;background:#fff;border:1px solid #a9a9a9"></div>
<div class="a" style="left:951px;top:436px;width:15px;height:15px;background:#fff;border:1px solid #cfcfcf"></div>
<svg class="a" style="left:954px;top:441px;" width="9" height="6" viewBox="0 0 9 6"><path d="M0 0.5 H9 L4.5 5 Z" fill="#666"/></svg>
<svg class="a" style="left:954px;top:456px;" width="9" height="9" viewBox="0 0 9 9"><path d="M0.5 4 H8.5 L4.5 0 Z M0.5 8.5 H8.5 L4.5 4.5 Z" fill="#777"/></svg>
<svg class="a" style="left:954px;top:473px;" width="9" height="9" viewBox="0 0 9 9"><path d="M0.5 0 H8.5 L4.5 4 Z M0.5 4.5 H8.5 L4.5 8.5 Z" fill="#777"/></svg>
<div class="a" style="left:9px;top:510px;width:958px;height:22px;background:#f1f1f1;border-top:1px solid #cdcdcd"></div>
<div class="a" style="left:16px;top:515.83px;font:400 11.3px/11.3px &quot;Liberation Sans&quot;;color:#444;transform:scaleX(0.9643);transform-origin:0 0;-webkit-text-stroke:0.12px #444;">Слайд 1 из 3</div>
<div class="a" style="left:100px;top:515.83px;font:400 11.3px/11.3px &quot;Liberation Sans&quot;;color:#444;transform:scaleX(1.0361);transform-origin:0 0;-webkit-text-stroke:0.12px #444;">русский</div>
<svg class="a" style="left:525px;top:515px;" width="11" height="12" viewBox="0 0 11 12"><path d="M0 5.6 H11 M0 8.4 H11 M0 11.3 H6" stroke="#666" stroke-width="1"/><path d="M3 2.6 H8 L5.5 0 Z" fill="#666"/></svg>
<div class="a" style="left:541px;top:515.83px;font:400 11.3px/11.3px &quot;Liberation Sans&quot;;color:#444;transform:scaleX(1.0068);transform-origin:0 0;-webkit-text-stroke:0.12px #444;">Заметки</div>
<div class="a" style="left:604px;top:511px;width:38px;height:21px;background:#c8c8c8"></div>
<svg class="a" style="left:616px;top:514px;" width="14" height="13" viewBox="0 0 14 13"><rect x="0.6" y="0.6" width="12.8" height="11.8" fill="none" stroke="#666" stroke-width="1.2"/><path d="M3.5 0.6 V12.4 M3.5 9 H13.4" stroke="#666" stroke-width="1.1"/><rect x="5.6" y="2.6" width="4.8" height="3.6" fill="none" stroke="#666" stroke-width="1.1"/></svg>
<svg class="a" style="left:654px;top:514px;" width="14" height="13" viewBox="0 0 14 13"><g fill="none" stroke="#666" stroke-width="1.2"><rect x="0.6" y="0.6" width="4.8" height="4.3"/><rect x="8.6" y="0.6" width="4.8" height="4.3"/><rect x="0.6" y="8.1" width="4.8" height="4.3"/><rect x="8.6" y="8.1" width="4.8" height="4.3"/></g></svg>
<svg class="a" style="left:692px;top:514px;" width="14" height="14" viewBox="0 0 14 14"><path d="M0.6 0.6 H5.5 L7 1.5 L8.5 0.6 H13.4 V11.4 H8.5 L7 12.4 L5.5 11.4 H0.6 Z" fill="none" stroke="#666" stroke-width="1.2"/><path d="M7 1.5 V13 M2.2 3.3 H5.5 M2.2 5.5 H5.5 M2.2 7.7 H5.5 M8.5 3.3 H11.8 M8.5 5.5 H11.8 M8.5 7.7 H11.8" stroke="#666" stroke-width="1"/></svg>
<svg class="a" style="left:730px;top:514px;" width="14" height="14" viewBox="0 0 14 14"><path d="M0 1.2 H14" stroke="#666" stroke-width="1.8"/><path d="M1.6 2 V7.6 H12.4 V2" fill="none" stroke="#666" stroke-width="1.2"/><path d="M7 7.6 V11.5 M4.5 12.2 H9.5" stroke="#666" stroke-width="1.2"/></svg>
<div class="a" style="left:761px;top:520px;width:6px;height:2px;background:#555"></div>
<div class="a" style="left:771px;top:520px;width:100px;height:1px;background:#9a9a9a"></div>
<div class="a" style="left:821px;top:518px;width:1px;height:5px;background:#9a9a9a"></div>
<div class="a" style="left:790px;top:516px;width:4px;height:10px;background:#555"></div>
<div class="a" style="left:875px;top:520px;width:8px;height:2px;background:#555"></div>
<div class="a" style="left:878px;top:517px;width:2px;height:8px;background:#555"></div>
<div class="a" style="left:897.5px;top:515.83px;font:400 11.3px/11.3px &quot;Liberation Sans&quot;;color:#444;transform:scaleX(0.9321);transform-origin:0 0;-webkit-text-stroke:0.12px #444;">45 %</div>
<svg class="a" style="left:936px;top:515px;" width="13" height="13" viewBox="0 0 13 13"><rect x="0.6" y="0.6" width="11.8" height="11.8" rx="1" fill="none" stroke="#666" stroke-width="1.2"/><path d="M6.5 0.5 V4.2 M6.5 8.8 V12.5 M0.5 6.5 H4.2 M8.8 6.5 H12.5" stroke="#666" stroke-width="1.1"/><path d="M5 2.3 H8 M5 10.7 H8 M2.3 5 V8 M10.7 5 V8" stroke="#666" stroke-width="1.1"/></svg>
<div class="a" style="left:8px;top:8px;width:960px;height:525px;border:1px solid #c9401f"></div>
</body></html>
